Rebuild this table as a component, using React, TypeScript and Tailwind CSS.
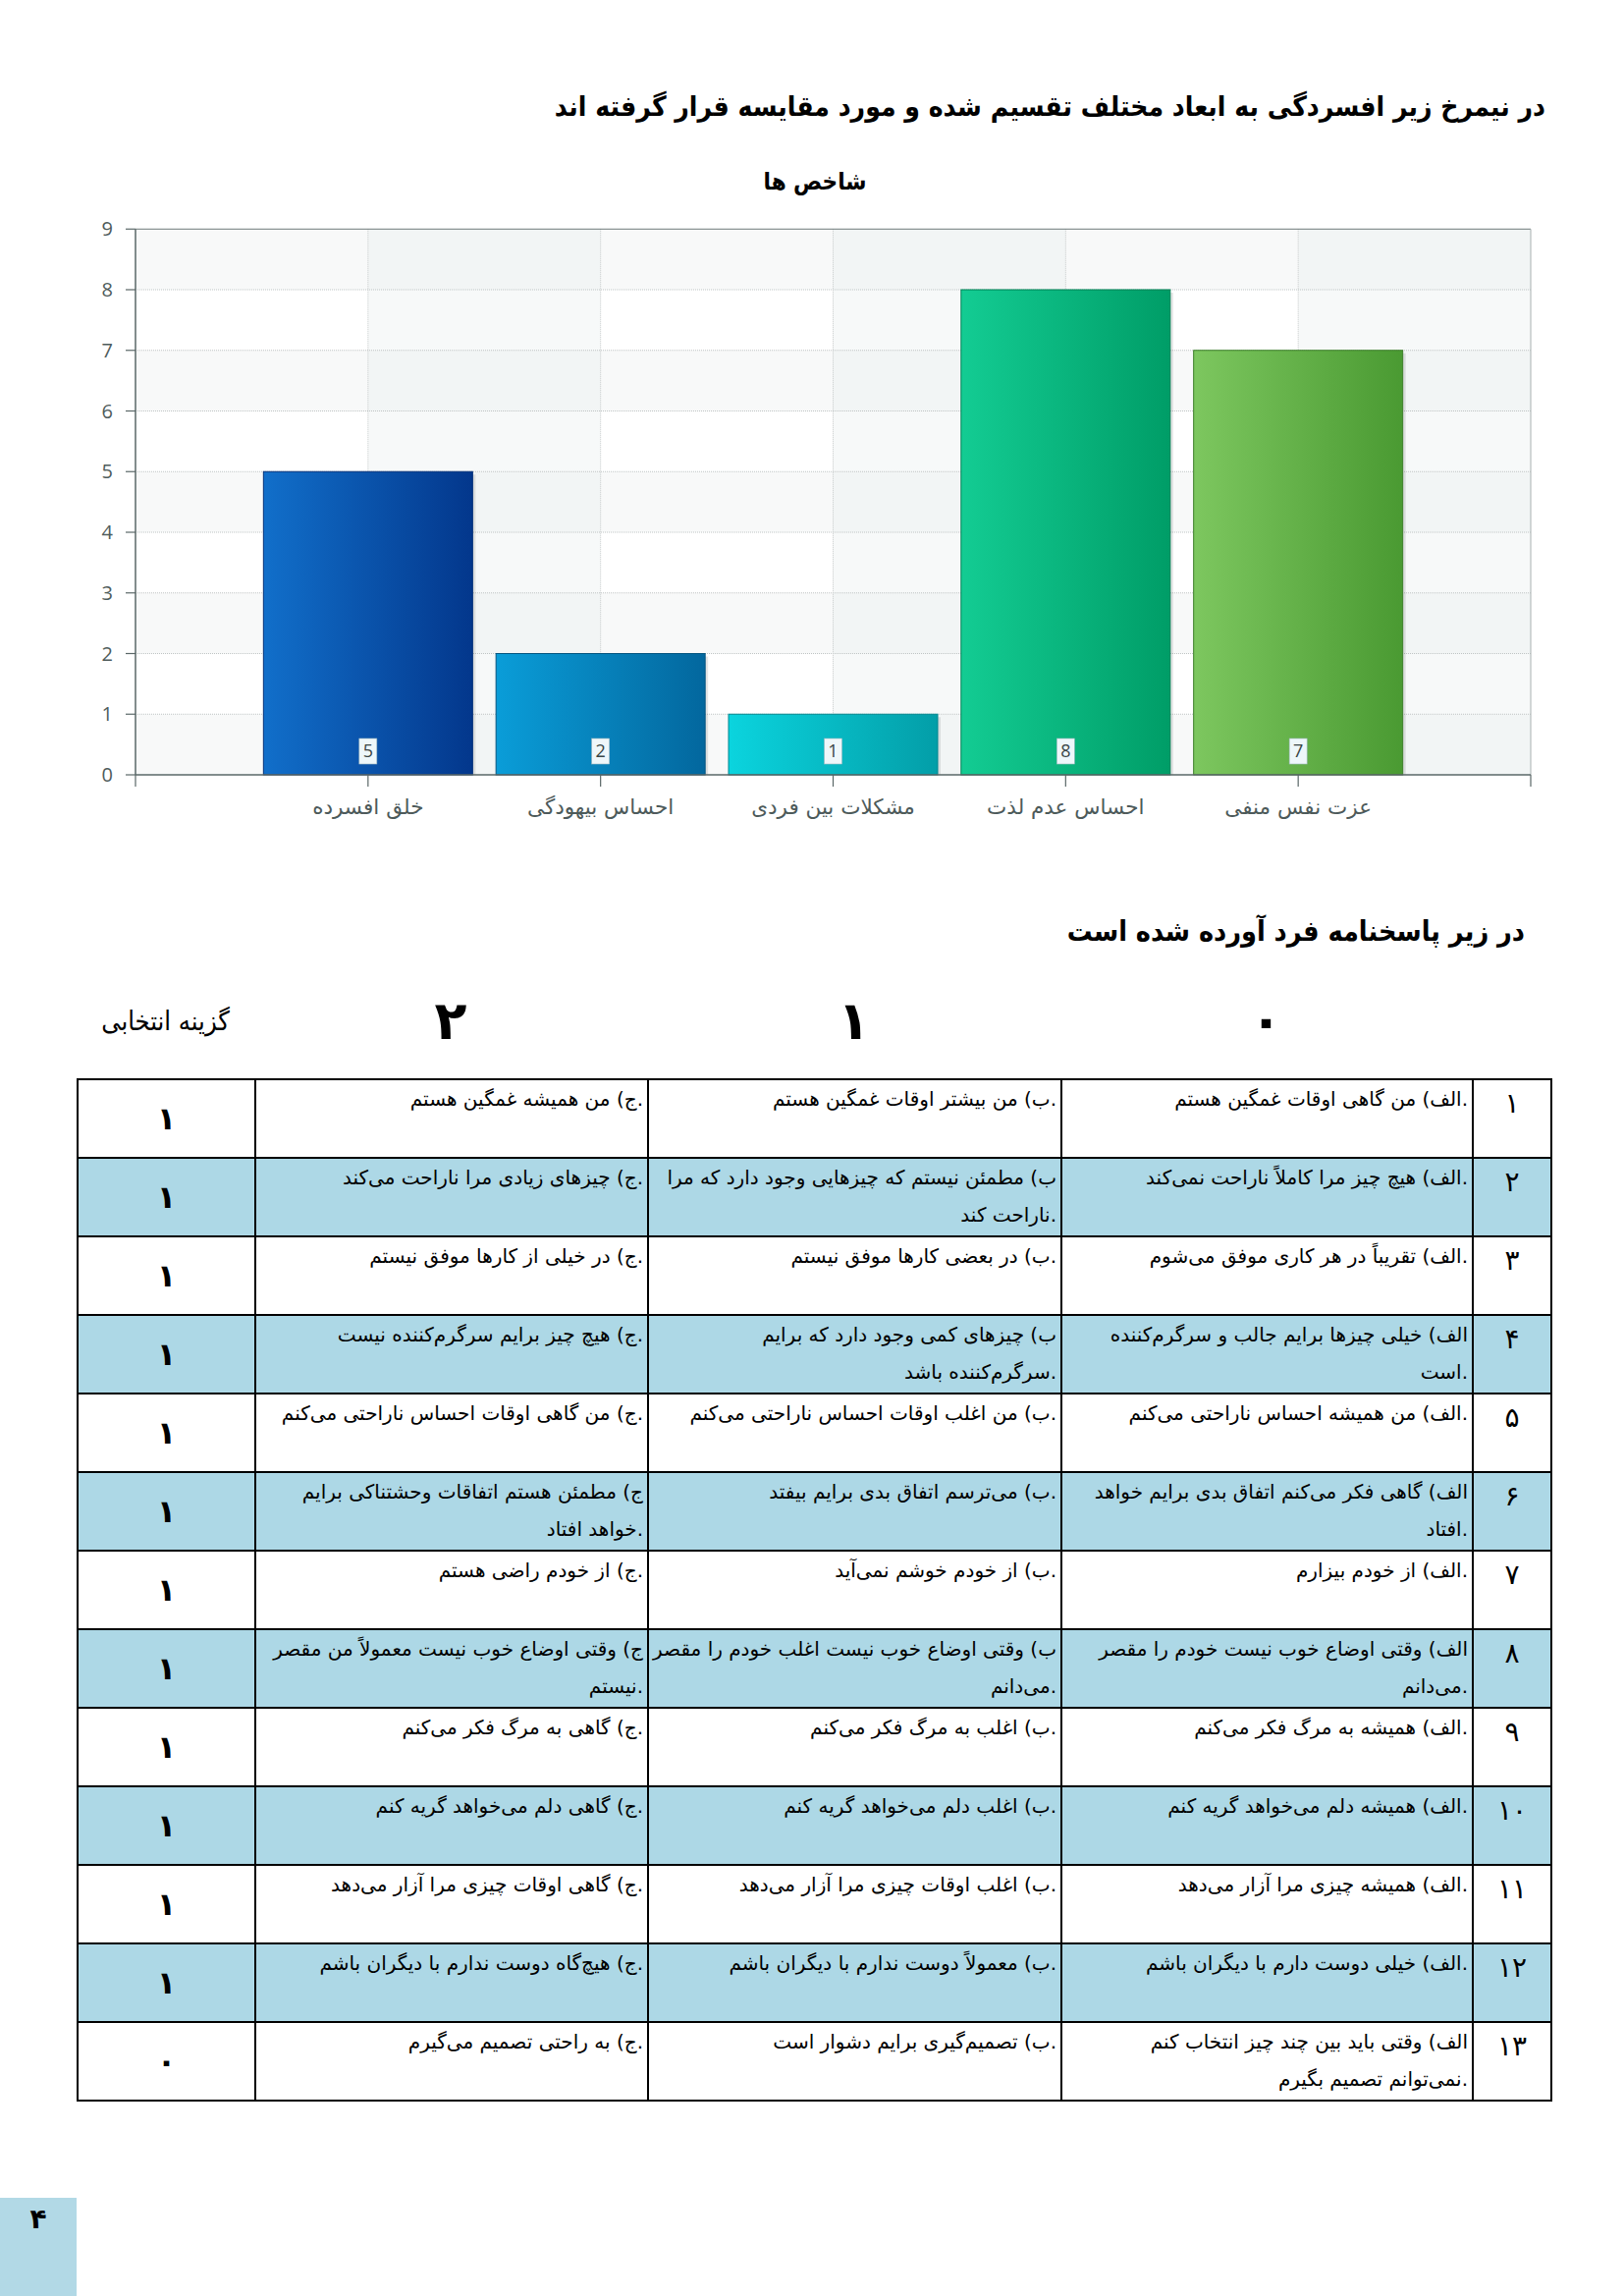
import React from 'react';

type Row = {
  n: string;
  a: string[];
  b: string[];
  c: string[];
  s: string;
};

const rows: Row[] = [
  { n: '۱', a: ['الف) من گاهی اوقات غمگین هستم.'], b: ['ب) من بیشتر اوقات غمگین هستم.'], c: ['ج) من همیشه غمگین هستم.'], s: '۱' },
  { n: '۲', a: ['الف) هیچ چیز مرا کاملاً ناراحت نمی‌کند.'], b: ['ب) مطمئن نیستم که چیزهایی وجود دارد که مرا', 'ناراحت کند.'], c: ['ج) چیزهای زیادی مرا ناراحت می‌کند.'], s: '۱' },
  { n: '۳', a: ['الف) تقریباً در هر کاری موفق می‌شوم.'], b: ['ب) در بعضی کارها موفق نیستم.'], c: ['ج) در خیلی از کارها موفق نیستم.'], s: '۱' },
  { n: '۴', a: ['الف) خیلی چیزها برایم جالب و سرگرم‌کننده', 'است.'], b: ['ب) چیزهای کمی وجود دارد که برایم', 'سرگرم‌کننده باشد.'], c: ['ج) هیچ چیز برایم سرگرم‌کننده نیست.'], s: '۱' },
  { n: '۵', a: ['الف) من همیشه احساس ناراحتی می‌کنم.'], b: ['ب) من اغلب اوقات احساس ناراحتی می‌کنم.'], c: ['ج) من گاهی اوقات احساس ناراحتی می‌کنم.'], s: '۱' },
  { n: '۶', a: ['الف) گاهی فکر می‌کنم اتفاق بدی برایم خواهد', 'افتاد.'], b: ['ب) می‌ترسم اتفاق بدی برایم بیفتد.'], c: ['ج) مطمئن هستم اتفاقات وحشتناکی برایم', 'خواهد افتاد.'], s: '۱' },
  { n: '۷', a: ['الف) از خودم بیزارم.'], b: ['ب) از خودم خوشم نمی‌آید.'], c: ['ج) از خودم راضی هستم.'], s: '۱' },
  { n: '۸', a: ['الف) وقتی اوضاع خوب نیست خودم را مقصر', 'می‌دانم.'], b: ['ب) وقتی اوضاع خوب نیست اغلب خودم را مقصر', 'می‌دانم.'], c: ['ج) وقتی اوضاع خوب نیست معمولاً من مقصر', 'نیستم.'], s: '۱' },
  { n: '۹', a: ['الف) همیشه به مرگ فکر می‌کنم.'], b: ['ب) اغلب به مرگ فکر می‌کنم.'], c: ['ج) گاهی به مرگ فکر می‌کنم.'], s: '۱' },
  { n: '۱۰', a: ['الف) همیشه دلم می‌خواهد گریه کنم.'], b: ['ب) اغلب دلم می‌خواهد گریه کنم.'], c: ['ج) گاهی دلم می‌خواهد گریه کنم.'], s: '۱' },
  { n: '۱۱', a: ['الف) همیشه چیزی مرا آزار می‌دهد.'], b: ['ب) اغلب اوقات چیزی مرا آزار می‌دهد.'], c: ['ج) گاهی اوقات چیزی مرا آزار می‌دهد.'], s: '۱' },
  { n: '۱۲', a: ['الف) خیلی دوست دارم با دیگران باشم.'], b: ['ب) معمولاً دوست ندارم با دیگران باشم.'], c: ['ج) هیچ‌گاه دوست ندارم با دیگران باشم.'], s: '۱' },
  { n: '۱۳', a: ['الف) وقتی باید بین چند چیز انتخاب کنم', 'نمی‌توانم تصمیم بگیرم.'], b: ['ب) تصمیم‌گیری برایم دشوار است.'], c: ['ج) به راحتی تصمیم می‌گیرم.'], s: '۰' },
];

const bars = [
  { label: 'خلق افسرده', value: 5, from: '#116fca', to: '#03378c', stroke: '#022f78' },
  { label: 'احساس بیهودگی', value: 2, from: '#0a9dd8', to: '#03679e', stroke: '#035580' },
  { label: 'مشکلات بین فردی', value: 1, from: '#0bd4de', to: '#039ea8', stroke: '#02868f' },
  { label: 'احساس عدم لذت', value: 8, from: '#13cc93', to: '#009d67', stroke: '#008055' },
  { label: 'عزت نفس منفی', value: 7, from: '#7dc75f', to: '#4a9a32', stroke: '#3d7f2a' },
];

// plot geometry, in page pixels
const L = 138;
const R = 1559;
const Y0 = 789;
const UNIT = 61.75;
const COL = (R - L) / 6;
const yOf = (v: number) => Y0 - v * UNIT;

function Chart() {
  return (
    <svg width="1654" height="640" viewBox="0 220 1654 640" className="block">
      <defs>
        {bars.map((b, i) => (
          <linearGradient key={i} id={`bar${i}`} x1="0" y1="0" x2="1" y2="0">
            <stop offset="0" stopColor={b.from} />
            <stop offset="1" stopColor={b.to} />
          </linearGradient>
        ))}
      </defs>

      {/* background bands */}
      <rect x={L} y={yOf(9)} width={R - L} height={9 * UNIT} fill="#ffffff" />
      {[8, 6, 4, 2, 0].map((v) => (
        <rect key={v} x={L} y={yOf(v + 1)} width={R - L} height={UNIT} fill="#f5f7f7" fillOpacity="0.75" />
      ))}
      {[1, 3, 5].map((c) => (
        <rect key={c} x={L + c * COL} y={yOf(9)} width={COL} height={9 * UNIT} fill="#e9eded" fillOpacity="0.35" />
      ))}

      {/* grid */}
      {[1, 2, 3, 4, 5, 6, 7, 8].map((v) => (
        <line key={v} x1={L} x2={R} y1={yOf(v)} y2={yOf(v)} stroke="#bfc4c4" strokeWidth="1" strokeDasharray="1 1" />
      ))}
      {[1, 2, 3, 4, 5].map((c) => (
        <line key={c} x1={L + c * COL} x2={L + c * COL} y1={yOf(9)} y2={Y0} stroke="#c6caca" strokeWidth="1" strokeDasharray="1 1" />
      ))}

      {/* frame */}
      <line x1={L} x2={R} y1={yOf(9)} y2={yOf(9)} stroke="#6b7777" strokeWidth="1.2" />
      <line x1={R} x2={R} y1={yOf(9)} y2={Y0} stroke="#a8b0b0" strokeWidth="1" />
      <line x1={L} x2={L} y1={yOf(9)} y2={Y0} stroke="#5a6767" strokeWidth="1.5" />

      {/* bars */}
      {bars.map((b, i) => {
        const cx = L + (i + 1) * COL;
        const w = 213;
        const top = yOf(b.value);
        return (
          <g key={i}>
            <rect x={cx - w / 2 + 3} y={top + 3} width={w} height={Y0 - top - 3} fill="#000000" fillOpacity="0.1" />
            <rect x={cx - w / 2} y={top} width={w} height={Y0 - top} fill={`url(#bar${i})`} stroke={b.stroke} strokeWidth="1" />
            <rect x={cx - 9} y={752} width={18} height={26} fill="#eef7fa" stroke="#9fb8c0" strokeWidth="0.6" />
            <text x={cx} y={771} textAnchor="middle" fontSize="18" fill="#3a4646" fontFamily="'Open Sans', 'DejaVu Sans', sans-serif">
              {b.value}
            </text>
            <text x={cx} y={829} textAnchor="middle" fontSize="21.5" fill="#4d5a5a" fontFamily="'DejaVu Sans', sans-serif">
              {b.label}
            </text>
          </g>
        );
      })}

      {/* x axis + ticks */}
      <line x1={L} x2={R} y1={Y0} y2={Y0} stroke="#5a6767" strokeWidth="1.5" />
      {[0, 1, 2, 3, 4, 5, 6].map((c) => (
        <line key={c} x1={L + c * COL} x2={L + c * COL} y1={Y0} y2={Y0 + 12} stroke="#5a6767" strokeWidth="1.2" />
      ))}

      {/* y axis labels + ticks */}
      {[0, 1, 2, 3, 4, 5, 6, 7, 8, 9].map((v) => (
        <g key={v}>
          <line x1={L - 10} x2={L} y1={yOf(v)} y2={yOf(v)} stroke="#5a6767" strokeWidth="1.2" />
          <text x={115} y={yOf(v) + 7} textAnchor="end" fontSize="20" fill="#4f5c5c" fontFamily="'Open Sans', sans-serif">
            {v}
          </text>
        </g>
      ))}
    </svg>
  );
}

function Cell({ lines }: { lines: string[] }) {
  return (
    <td className="border-2 border-black align-top text-right px-[4px] pt-0 text-[20px] leading-[38px]">
      {lines.map((t, i) => (
        <div key={i} dir="ltr" className="whitespace-nowrap">
          {t}
        </div>
      ))}
    </td>
  );
}

export default function App() {
  return (
    <div className="w-[1654px] h-[2338px] bg-white text-black font-['DejaVu_Sans',sans-serif] flex flex-col">
      <h1 dir="rtl" className="pt-[89px] pr-[80px] text-right text-[28px] leading-[40px] font-bold font-stretch-condensed">
        در نیمرخ زیر افسردگی به ابعاد مختلف تقسیم شده و مورد مقایسه قرار گرفته اند
      </h1>

      <div dir="rtl" className="mt-[40px] w-[1660px] text-center text-[24px] leading-[32px] font-bold font-stretch-condensed">
        شاخص ها
      </div>

      <div className="mt-[19px]">
        <Chart />
      </div>

      <h2 dir="rtl" className="mt-[69px] pr-[101px] text-right text-[28.5px] leading-[40px] font-bold font-stretch-condensed">
        در زیر پاسخنامه فرد آورده شده است
      </h2>

      {/* column captions */}
      <div className="mt-[41px] ml-[78px] grid grid-cols-[181px_400px_421px_419px_80px] items-center h-[60px]">
        <div dir="rtl" className="text-center text-[27px] font-stretch-condensed">گزینه انتخابی</div>
        <div className="text-center text-[54px] leading-none font-bold">۲</div>
        <div className="text-center text-[54px] leading-none font-bold">۱</div>
        <div className="text-center text-[54px] leading-none font-bold">۰</div>
        <div />
      </div>

      <table dir="rtl" className="mt-[28px] ml-[78px] w-[1501px] table-fixed border-collapse border-2 border-black">
        <colgroup>
          <col className="w-[80px]" />
          <col className="w-[419px]" />
          <col className="w-[421px]" />
          <col className="w-[400px]" />
          <col className="w-[181px]" />
        </colgroup>
        <tbody>
          {rows.map((r, i) => (
            <tr key={i} className={`h-[80px] ${i % 2 === 1 ? 'bg-[#add8e6]' : 'bg-white'}`}>
              <td className="border-2 border-black align-top text-center pt-[4px] text-[28px] leading-[40px]">{r.n}</td>
              <Cell lines={r.a} />
              <Cell lines={r.b} />
              <Cell lines={r.c} />
              <td className="border-2 border-black align-middle text-center text-[32px] font-bold">{r.s}</td>
            </tr>
          ))}
        </tbody>
      </table>

      <div className="mt-auto w-[78px] h-[100px] bg-[#b2d9e6] flex justify-center pt-[8px]">
        <span className="text-[28px] font-bold leading-none">۴</span>
      </div>
    </div>
  );
}
